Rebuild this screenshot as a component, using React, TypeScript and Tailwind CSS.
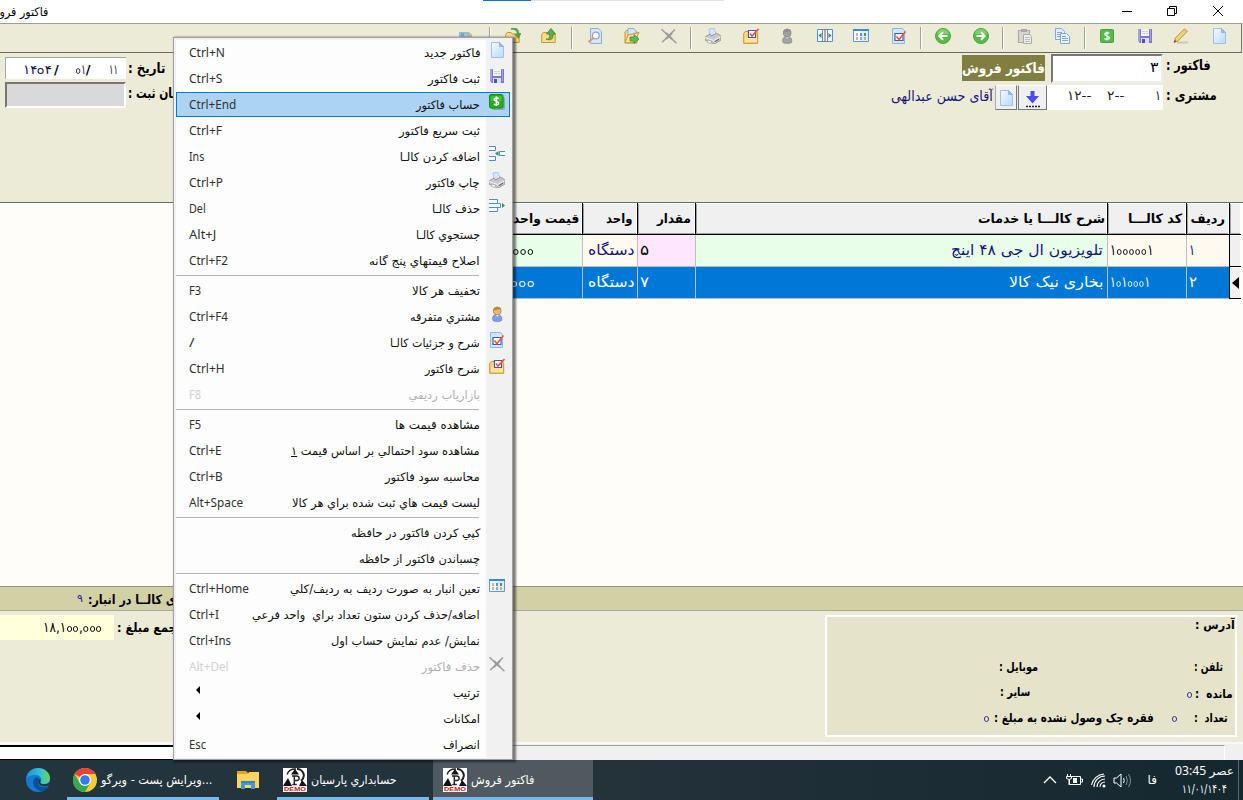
import React, { useLayoutEffect, useRef, useState } from "react";

/* Text squeezed or stretched horizontally to the width given by its class. */
function Fit({ className, children, ltr }: { className: string; children: React.ReactNode; ltr?: boolean }) {
  const outer = useRef<HTMLSpanElement>(null);
  const inner = useRef<HTMLSpanElement>(null);
  const [s, setS] = useState(1);
  useLayoutEffect(() => {
    if (outer.current && inner.current && inner.current.offsetWidth) {
      setS(outer.current.offsetWidth / inner.current.offsetWidth);
    }
  }, []);
  return (
    <span ref={outer} dir={ltr ? "ltr" : "rtl"} className={"block shrink-0 whitespace-pre " + className}>
      <span ref={inner} className={ltr ? "inline-block origin-left" : "inline-block origin-right"} style={{ transform: `scaleX(${s})` }}>
        {children}
      </span>
    </span>
  );
}

/* Number whose zeros are drawn as open rings. */
function Num({ v, className }: { v: string; className: string }) {
  return (
    <Fit ltr className={className}>
      {v.split("").map((c, n) =>
        c === "۰" ? (
          <span key={n} className="relative inline-block">
            <span className="opacity-0">۰</span>
            <span className="absolute top-1/2 left-1/2 h-[6px] w-[6px] -translate-x-1/2 -translate-y-[2px] rounded-full border-[1.5px] border-current" />
          </span>
        ) : (
          <span key={n}>{c}</span>
        )
      )}
    </Fit>
  );
}

const Svg = ({ children }: { children: React.ReactNode }) => (
  <svg width="16" height="16" viewBox="0 0 16 16" className="block shrink-0">{children}</svg>
);

const PageI = () => (
  <Svg>
    <defs><linearGradient id="pg" x1="0" y1="0" x2="1" y2="1"><stop offset="0" stopColor="#f4f9ff" /><stop offset="1" stopColor="#b5dcfa" /></linearGradient></defs>
    <path d="M2.500.5h8l4 4v11h-12z" fill="url(#pg)" stroke="#a9bbe2" />
    <path d="M10.500.5v4h4z" fill="#8fbdec" stroke="#8fa9da" strokeWidth=".8" />
  </Svg>
);
const SaveI = () => (
  <Svg>
    <path d="M1 1h14v14H3l-2-2z" fill="#7d7acb" />
    <path d="M1 1h2v12H1zM13 1h1v12h-1z" fill="#a3a1e2" />
    <path d="M4 1h8v7H4z" fill="#f3f3f3" />
    <path d="M5 3.500h6M5 5.500h6" stroke="#d3d3d3" />
    <path d="M4 10h8v5H4z" fill="#dcdcf4" />
    <path d="M5 11h3v4H5z" fill="#5551a8" />
  </Svg>
);
const DollarI = () => (
  <Svg>
    <rect x="3" y="3" width="13" height="13" rx="1.500" fill="#6f9e8f" opacity=".7" />
    <rect x=".5" y=".5" width="13.500" height="13.500" rx="1.500" fill="#27ab1c" stroke="#158f10" />
    <path d="M2 2h11v5H2z" fill="#62cf4f" opacity=".5" />
    <path d="M9.700 4.700C8.700 3.900 5.200 3.700 5.200 5.700c0 2 4.500 1.300 4.500 3.500 0 2-3.500 1.900-4.800.9M7.400 2.500v9.500" fill="none" stroke="#fff" strokeWidth="1.500" />
  </Svg>
);
const DollarFlatI = () => (
  <Svg>
    <rect x="1.500" y="1.500" width="13" height="13" rx="1" fill="#55ba4b" stroke="#43a43b" />
    <path d="M10.300 5.200C9.300 4.400 5.800 4.200 5.800 6.200c0 2 4.500 1.300 4.500 3.500 0 2-3.500 1.900-4.800.9M8 3.500v9" fill="none" stroke="#fff" strokeWidth="1.300" />
  </Svg>
);
const InsertI = () => (
  <Svg>
    <path d="M0 .500h6.500v4H0M0 10.500h6.500v4H0M16 5.500h-5.500v4H16" fill="#f8fbff" stroke="#4a8fd6" />
    <path d="M9.500 5v5L6 7.500z" fill="#3b8b49" />
  </Svg>
);
const RemoveI = () => (
  <Svg>
    <path d="M0 1.500h8.500v4H0M0 9.500h8.500v4H0M0 5.500h11.500v4H0" fill="#f8fbff" stroke="#4a8fd6" />
    <path d="M13 5v5l3-2.500z" fill="#3b8b49" />
  </Svg>
);
const PrinterI = () => (
  <Svg>
    <path d="M4 1l5-1 2 6-6 2z" fill="#d5e6fc" stroke="#9fbce8" strokeWidth=".8" />
    <path d="M0 9l5-3 1.500 2 4-2 1-1 4.500 3v4l-7 4L0 12z" fill="#c8c8c8" stroke="#8c8c8c" strokeWidth=".8" />
    <path d="M0 9.500l8.500 3 7-4" fill="none" stroke="#f4f4f4" />
    <path d="M3 12l4 1.500-1.500 2L2 14z" fill="#fff" stroke="#888" strokeWidth=".6" />
    <path d="M10 13.500l4-2.300" stroke="#555" />
  </Svg>
);
const PersonI = ({ gray }: { gray?: boolean }) => (
  <Svg>
    <path d="M4 14.500c-1-3 0-6 4-6s5.500 3 4.500 6c-1.500 1.200-7 1.200-8.500 0z" fill={gray ? "#a3a3a3" : "#7f9fee"} stroke={gray ? "#8c8c8c" : "#5f7bd4"} strokeWidth=".8" />
    <circle cx="8.200" cy="5" r="3.900" fill={gray ? "#a0a0a0" : "#f0b76b"} stroke={gray ? "#888" : "#b98337"} strokeWidth=".8" />
    <path d="M4.300 5c-.5-5 7-5.500 8-1.500-3-1-5 .5-6 .500z" fill={gray ? "#8f8f8f" : "#b98a34"} />
    <path d="M7 9l1.300 2L10 9z" fill={gray ? "#ccc" : "#d8e4ff"} />
  </Svg>
);
const CheckPageI = () => (
  <Svg>
    <path d="M1.500.5h10l2 2v13h-12z" fill="#cfe6fb" stroke="#8fb4e6" />
    <path d="M4 5.500h8v7H4z" fill="#fff" stroke="#4b55a5" strokeWidth="1.200" />
    <path d="M5.500 8.500l2.500 3L14.500 3.500" fill="none" stroke="#f0503a" strokeWidth="1.500" />
  </Svg>
);
const FolderPath = () => (
  <path d="M.7 14.500V6.500l1.500-2h4l1 1.500h7v8.500z" fill="#fbdb83" stroke="#c79336" />
);
const CheckFolderI = () => (
  <Svg>
    <path d="M.7 15.300V5.500l1.500-2h11.500l1 2v9.800z" fill="#fbd57b" stroke="#c79336" />
    <path d="M2 9h12v5H2z" fill="#fde9a8" opacity=".7" />
    <path d="M5.500 2.500h7v7h-7z" fill="#fff" stroke="#4b55a5" strokeWidth="1.200" />
    <path d="M7 5.500l2 2.500L15.500 1" fill="none" stroke="#f0503a" strokeWidth="1.600" />
  </Svg>
);
const TableI = () => (
  <Svg>
    <path d="M.5 2.500h15v11H.5z" fill="#f6faff" stroke="#5b9bdb" />
    <path d="M9 3h6v10H6z" fill="#d8ecfc" />
    <path d="M0 1h16v2H0z" fill="#3f87d8" />
    <path d="M3 5h2v3H3z" fill="#b6b2dc" /><path d="M7 5h2v3H7z" fill="#5f8fd8" /><path d="M11 5h2v3h-2z" fill="#4c9b4f" />
    <path d="M3 9h2v3H3z" fill="#f0a07b" /><path d="M7 9h2v3H7z" fill="#7eb3e8" /><path d="M11 9h2v3h-2z" fill="#d8b05c" />
  </Svg>
);
const CrossI = () => (
  <Svg>
    <path d="M.5 1.200L15.500 15.300M14 1.500L1.200 14.200" stroke="#9b9b9b" strokeWidth="1.500" />
    <path d="M5 5l6 6M11 5l-6 6" stroke="#9b9b9b" strokeWidth="2" />
  </Svg>
);
const OpenI = () => (
  <Svg>
    <FolderPath />
    <path d="M6 .8c4-1 7 1 7.300 5" fill="none" stroke="#55a84c" strokeWidth="2.600" />
    <path d="M9 6l7.500-1-3 6z" fill="#4da044" />
  </Svg>
);
const UpI = () => (
  <Svg>
    <FolderPath />
    <path d="M5 11c3 1 4-2 3.500-5H5.500L10 .5 14.500 6H12c.5 5-2 7-7 5z" fill="#5bb04f" stroke="#388539" strokeWidth=".8" />
  </Svg>
);
const PreviewI = () => (
  <Svg>
    <path d="M2.500.5h8l3 3v12h-11z" fill="#d5e6fb" stroke="#94acd9" />
    <circle cx="7.800" cy="7.500" r="3.400" fill="#fff" stroke="#94a2bc" strokeWidth="1.300" />
    <path d="M5.300 10L.5 14" stroke="#cba271" strokeWidth="2" />
  </Svg>
);
const ExportI = () => (
  <Svg>
    <path d="M1 15V4l2-2 2 2h8v11z" fill="#fbdb83" stroke="#c79336" />
    <path d="M4 .5h6l2 3v4H4z" fill="#d5e6fb" stroke="#94acd9" />
    <path d="M1 15l3-8 11-2.500-2 4-3 6z" fill="#fde49b" stroke="#c79336" />
    <path d="M6 9h4V6.500l5 4.500-5 4.500V13H6z" fill="#63b955" stroke="#3a8f3a" strokeWidth=".8" />
  </Svg>
);
const ColumnsI = () => (
  <Svg>
    <path d="M.5 1.500h15v12H.5z" fill="#f4f9ff" stroke="#4d92da" />
    <path d="M5.500 1v13M10.500 1v13" stroke="#4d92da" /><path d="M8 1v13" stroke="#d25656" strokeWidth="1.200" />
    <path d="M4.500 5v5L1.500 7.500zM11.500 5v5l3-2.500z" fill="#3b8b49" />
  </Svg>
);
const ArrowI = ({ right }: { right?: boolean }) => (
  <Svg>
    <circle cx="8" cy="8" r="7.500" fill="#58bb47" stroke="#48a43b" />
    <path d="M2 6a6 5 0 0 1 12 0z" fill="#9bdd87" opacity=".6" />
    <path d={right ? "M3.500 8h8M8 4.300L11.700 8 8 11.700" : "M12.500 8h-8M8 4.300L4.300 8 8 11.700"} fill="none" stroke="#fff" strokeWidth="2" />
  </Svg>
);
const PasteI = () => (
  <Svg>
    <path d="M1.500 2.500h11v12h-11z" fill="#d9d7cd" stroke="#aaa" strokeWidth="1.200" /><path d="M4 1h6v3H4z" fill="#aaa" />
    <path d="M6.500 6.500h6l2 2v7h-8z" fill="#efefef" stroke="#aaa" /><path d="M8 9.500h5M8 11.500h5M8 13.500h5" stroke="#bbb" />
  </Svg>
);
const CopyI = () => (
  <Svg>
    <path d="M.5.500h6l3 3v8h-9z" fill="#e0efff" stroke="#83a5da" /><path d="M2 4.500h5M2 6.500h5M2 8.500h5" stroke="#7fa7e0" />
    <path d="M5.500 5.500h6l3 3v7h-9z" fill="#e8f3ff" stroke="#83a5da" /><path d="M7 8.500h4M7 10.500h6M7 12.500h6" stroke="#7fa7e0" />
  </Svg>
);
const PencilI = () => (
  <Svg>
    <path d="M4 14.500h11" stroke="#c9c6b5" strokeWidth="2" />
    <path d="M1 14.500l1.500-4.500L11.500.8l3 2.400L5 12.800z" fill="#f9d46b" stroke="#b5852e" strokeWidth=".9" />
    <path d="M1 14.500l.8-2.500 1.500 1.300z" fill="#333" /><path d="M10.500 2l3 2.200 1.200-1L11.800.8z" fill="#f1a29a" />
  </Svg>
);
const PictureI = () => (
  <Svg><path d="M1 4h10l3 3v9H1z" fill="#8ebfe2" /><path d="M3 5h3v3H3z" fill="#6ba7d4" /><path d="M10 4l4 3-2 2z" fill="#e6b464" /><path d="M7 6h2v3H7z" fill="#b9d485" /></Svg>
);

const Sep = ({ m }: { m: string }) => <div className={"h-[22px] w-[2px] shrink-0 border-l border-[#a0a098] bg-white " + m} />;

const tools: { m: string; i?: React.ReactNode }[] = [
  { m: "", i: <PictureI /> }, { m: "ml-[15px]" },
  { m: "ml-[14px]", i: <OpenI /> }, { m: "ml-[20px]", i: <UpI /> }, { m: "ml-[14px]" },
  { m: "ml-[15px]", i: <PreviewI /> }, { m: "ml-[20px]", i: <ExportI /> }, { m: "ml-[21px]", i: <CrossI /> }, { m: "ml-[13px]" },
  { m: "ml-[13px]", i: <PrinterI /> }, { m: "ml-[22px]", i: <CheckFolderI /> }, { m: "ml-[20px]", i: <PersonI gray /> },
  { m: "ml-[22px]", i: <ColumnsI /> }, { m: "ml-[20px]", i: <TableI /> }, { m: "ml-[22px]", i: <CheckPageI /> }, { m: "ml-[13px]" },
  { m: "ml-[13px]", i: <ArrowI /> }, { m: "ml-[22px]", i: <ArrowI right /> }, { m: "ml-[13px]" },
  { m: "ml-[13px]", i: <PasteI /> }, { m: "ml-[22px]", i: <CopyI /> }, { m: "ml-[13px]" },
  { m: "ml-[13px]", i: <DollarFlatI /> }, { m: "ml-[22px]", i: <SaveI /> }, { m: "ml-[20px]", i: <PencilI /> }, { m: "ml-[22px]", i: <PageI /> },
];

type Item = { t: string; w: string; k?: string; kw?: string; i?: React.ReactNode; off?: boolean; on?: boolean; sub?: boolean; u?: string };
const groups: Item[][] = [
  [
    { t: "فاکتور جديد", w: "w-[56px]", k: "Ctrl+N", kw: "w-[36px]", i: <PageI /> },
    { t: "ثبت فاکتور", w: "w-[52px]", k: "Ctrl+S", kw: "w-[33px]", i: <SaveI /> },
    { t: "حساب فاکتور", w: "w-[64px]", k: "Ctrl+End", kw: "w-[47px]", i: <DollarI />, on: true },
    { t: "ثبت سريع فاکتور", w: "w-[81px]", k: "Ctrl+F", kw: "w-[33px]" },
    { t: "اضافه کردن کالـا", w: "w-[80px]", k: "Ins", kw: "w-[15px]", i: <InsertI /> },
    { t: "چاپ فاکتور", w: "w-[54px]", k: "Ctrl+P", kw: "w-[34px]", i: <PrinterI /> },
    { t: "حذف کالـا", w: "w-[48px]", k: "Del", kw: "w-[17px]", i: <RemoveI /> },
    { t: "جستجوي کالـا", w: "w-[64px]", k: "Alt+J", kw: "w-[27px]" },
    { t: "اصلاح قيمتهاي پنج گانه", w: "w-[111px]", k: "Ctrl+F2", kw: "w-[39px]" },
  ],
  [
    { t: "تخفيف هر کالا", w: "w-[68px]", k: "F3", kw: "w-[12px]" },
    { t: "مشتري متفرقه", w: "w-[70px]", k: "Ctrl+F4", kw: "w-[39px]", i: <PersonI /> },
    { t: "شرح و جزئيات کالـا", w: "w-[90px]", k: "/", kw: "w-[5px]", i: <CheckPageI /> },
    { t: "شرح فاکتور", w: "w-[55px]", k: "Ctrl+H", kw: "w-[36px]", i: <CheckFolderI /> },
    { t: "بازارياب رديفي", w: "w-[71px]", k: "F8", kw: "w-[12px]", off: true },
  ],
  [
    { t: "مشاهده قيمت ها", w: "w-[85px]", k: "F5", kw: "w-[12px]" },
    { t: "مشاهده سود احتمالي بر اساس قيمت ", u: "۱", w: "w-[189px]", k: "Ctrl+E", kw: "w-[33px]" },
    { t: "محاسبه سود فاکتور", w: "w-[95px]", k: "Ctrl+B", kw: "w-[34px]" },
    { t: "ليست قيمت هاي ثبت شده براي هر کالا", w: "w-[188px]", k: "Alt+Space", kw: "w-[54px]" },
  ],
  [
    { t: "کپي کردن فاکتور در حافظه", w: "w-[129px]" },
    { t: "چسباندن فاکتور از حافظه", w: "w-[121px]" },
  ],
  [
    { t: "تعين انبار به صورت رديف به رديف/کلي", w: "w-[190px]", k: "Ctrl+Home", kw: "w-[60px]", i: <TableI /> },
    { t: "اضافه/حذف کردن ستون تعداد براي  واحد فرعي", w: "w-[228px]", k: "Ctrl+I", kw: "w-[30px]" },
    { t: "نمايش/ عدم نمايش حساب اول", w: "w-[149px]", k: "Ctrl+Ins", kw: "w-[42px]" },
    { t: "حذف فاکتور", w: "w-[58px]", k: "Alt+Del", kw: "w-[40px]", off: true, i: <CrossI /> },
    { t: "ترتيب", w: "w-[27px]", sub: true },
    { t: "امکانات", w: "w-[37px]", sub: true },
    { t: "انصراف", w: "w-[37px]", k: "Esc", kw: "w-[17px]" },
  ],
];

function MenuRow({ it }: { it: Item }) {
  const tone = it.off ? "text-[#b0b0b0]" : "text-[#101010]";
  const keyTone = it.off ? "text-[#d2d2d2]" : "text-[#303030]";
  return (
    <div className="relative flex h-[26px] items-center">
      {it.on && <div className="absolute top-0 left-0 h-[25px] w-[334px] border border-[#0078d7] bg-[#add3f3]" />}
      <div className="relative flex w-[304px] items-center justify-between pl-[13px]">
        {it.k ? (
          <Fit ltr className={"font-['Noto_Sans'] text-[12px] leading-[26px] " + it.kw + " " + keyTone}>{it.k}</Fit>
        ) : it.sub ? (
          <svg width="4" height="8" viewBox="0 0 4 8" className="mb-[6px] ml-[7px]"><path d="M4 0v8L0 4z" fill="#000" /></svg>
        ) : <span />}
        <Fit className={"text-[11.5px] leading-[26px] " + it.w + " " + tone}>{it.t}{it.u && <u>{it.u}</u>}</Fit>
      </div>
      <div className="relative mb-[6px] ml-[9px]">{it.i}</div>
    </div>
  );
}

function Menu() {
  return (
    <div dir="ltr" className="absolute top-[37px] left-[173px] z-10 h-[723px] w-[340px] border border-[#a0a0a0] bg-[#f1f1f1] pt-[2px] pl-[2px] shadow-[2px_1px_2px_1px_rgba(0,0,0,0.5)]">
      <div className="h-[718px] w-[310px] bg-[#fdfdfd]">
        {groups.map((g, n) => (
          <React.Fragment key={n}>
            {n > 0 && <div className="h-[4px] w-[303px] pt-[1px]"><div className="h-px bg-[#b4b4b4]" /></div>}
            <div className="w-[334px]">{g.map((it) => <MenuRow key={it.t} it={it} />)}</div>
          </React.Fragment>
        ))}
      </div>
    </div>
  );
}

function FormArea() {
  return (
    <div className="flex h-[149px] justify-between bg-[#ecebd8]">
      <div className="flex w-[190px] flex-col pt-[4px] pl-[5px]">
        <div className="flex h-[25px]">
          <div className="flex h-[22px] w-[121px] items-center border-t border-l border-[#a9a89d] bg-white pt-[2px] pl-[17px] text-[13px] text-[#14143c]">
            <Num className="w-[29px]" v="۱۴۰۴" /><span className="ml-[2px] font-bold text-black">/</span>
            <Num className="ml-[17px] w-[10px]" v="۰۱" /><span className="font-bold text-black">/</span>
            <Num className="ml-[18px] w-[9px]" v="۱۱" />
          </div>
          <Fit className="ml-[2px] w-[37px] text-[14px] leading-[22px] font-bold">تاریخ :</Fit>
        </div>
        <div className="flex">
          <div className="h-[26px] w-[121px] border-2 border-t-[#77766f] border-r-white border-b-white border-l-[#77766f] bg-[#d9d9d9]" />
          <Fit className="ml-[2px] w-[57px] text-[14px] leading-[22px] font-bold">زمان ثبت :</Fit>
        </div>
      </div>
      <div className="flex flex-col pt-[1px] pr-[26px]">
        <div className="flex justify-end pr-[6px]">
          <div className="mt-[1px] h-[26px] w-[83px] bg-[#807f41]">
            <Fit className="w-[83px] text-[14px] leading-[27px] font-bold text-white">فاکتور فروش</Fit>
          </div>
          <div className="ml-[6px] flex h-[29px] w-[112px] justify-end border-2 border-t-[#77766f] border-r-[#eee] border-b-[#eee] border-l-[#77766f] bg-white pr-[2px]">
            <Fit className="w-[9px] text-[14px] leading-[22px]">۳</Fit>
          </div>
          <Fit className="ml-[3px] w-[45px] text-[14px] leading-[22px] font-bold">فاکتور :</Fit>
        </div>
        <div className="mt-[2px] flex">
          <Fit className="mr-[2px] w-[102px] text-[14px] leading-[22px] text-[#14147a]">آقای حسن عبدالهی</Fit>
          <div className="flex h-[25px] w-[22px] items-center justify-center border border-t-white border-r-[#777] border-b-[#777] border-l-[#aaa] bg-[#f0f0f0]"><PageI /></div>
          <div className="ml-px flex h-[25px] w-[29px] items-center justify-center border border-t-white border-r-[#777] border-b-[#777] border-l-[#777] bg-[#f0f0f0]">
            <svg width="16" height="20" viewBox="0 0 16 20"><path d="M5.500 3h4v5h4.500L7.500 15.500 1 8h4.500z" fill="#4a4afa" /><path d="M1 18.500h14" stroke="#222" strokeWidth="1.500" strokeDasharray="2 1" /></svg>
          </div>
          <div className="flex h-[25px] w-[116px] bg-white text-[13px] leading-[22px] text-[#202020]">
            <Fit ltr className="ml-[20px] w-[24px]">١٢--</Fit>
            <Fit ltr className="ml-[16px] w-[17px]">٢--</Fit>
            <Fit ltr className="ml-[31px] w-[6px]">١</Fit>
          </div>
          <Fit className="ml-[3px] w-[51px] text-[14px] leading-[21px] font-bold">مشتری :</Fit>
        </div>
      </div>
    </div>
  );
}

const head = "flex h-[32px] items-center border-b border-b-black border-l border-l-black bg-[#f0f0f0] text-[13px] font-bold shadow-[inset_-1px_1px_0_#fff,inset_1px_-1px_0_#a0a0a0]";
const cell = "flex h-[32px] items-center border-b border-l border-[#bdbdbd] text-[15px]";

function Grid() {
  return (
    <div className="h-[384px] border-t border-[#696969] bg-[#fefdfa]">
      <div dir="rtl" className="ml-auto grid w-[843px] grid-cols-[12px_43px_79px_412px_58px_55px_1fr] pr-[2px]">
        <div className={head} />
        <div className={head + " pr-[4px]"}><Fit className="w-[35px]">ردیف</Fit></div>
        <div className={head + " pr-[4px]"}><Fit className="w-[54px]">کد کالـــا</Fit></div>
        <div className={head + " pr-[2px]"}><Fit className="w-[127px]">شرح کالـــا یا خدمات</Fit></div>
        <div className={head + " pr-[4px]"}><Fit className="w-[34px]">مقدار</Fit></div>
        <div className={head + " pr-[5px]"}><Fit className="w-[26px]">واحد</Fit></div>
        <div className={head + " pr-[3px]"}><Fit className="w-[66px]">قیمت واحد</Fit></div>

        <div className="h-[32px] border-b border-l border-black bg-[#f0f0f0] shadow-[inset_-1px_1px_0_#fff]" />
        <div className={cell + " justify-end bg-[#fffaf0] pl-[2px] text-[#14147a]"}><Fit ltr className="w-[6px]">۱</Fit></div>
        <div className={cell + " justify-end bg-[#fffaf0] pl-[2px]"}><Num className="w-[43px]" v="۱۰۰۰۰۰۱" /></div>
        <div className={cell + " bg-[#e8fee9] pr-[4px] text-[#14147a]"}><Fit className="w-[152px]">تلویزیون ال جی ۴۸ اینچ</Fit></div>
        <div className={cell + " justify-end bg-[#fde6fe] pl-[2px]"}><Fit ltr className="w-[9px]">۵</Fit></div>
        <div className={cell + " bg-[#fffaf0] pr-[3px] text-[#14147a]"}><Fit className="w-[47px]">دستگاه</Fit></div>
        <div className={cell + " bg-[#e8fee9] pr-[48px]"}><Num className="w-[60px]" v="۲,۵۰۰,۰۰۰" /></div>

        <div className="flex h-[32px] items-center border-b border-l border-black bg-[#f0f0f0] shadow-[inset_-1px_1px_0_#fff]">
          <svg width="7" height="12" viewBox="0 0 7 12" className="mr-[2px]"><path d="M7 0v12L0 6z" fill="#000" /></svg>
        </div>
        <div className={cell + " justify-end bg-[#0078d7] pl-[2px] text-white"}><Fit ltr className="w-[8px]">۲</Fit></div>
        <div className={cell + " justify-end bg-[#0078d7] pl-[2px] text-white"}><Num className="w-[40px]" v="۱۰۱۰۰۰۱" /></div>
        <div className={cell + " bg-[#0078d7] pr-[4px] text-white"}><Fit className="w-[94px]">بخاری نیک کالا</Fit></div>
        <div className={cell + " justify-end bg-[#0078d7] pl-[2px] text-white"}><Fit ltr className="w-[9px]">۷</Fit></div>
        <div className={cell + " bg-[#0078d7] pr-[3px] text-white"}><Fit className="w-[47px]">دستگاه</Fit></div>
        <div className={cell + " bg-[#0078d7] pr-[47px] text-white"}><Num className="w-[56px]" v="۸۰۰,۰۰۰" /></div>
      </div>
    </div>
  );
}

function Details() {
  const row = "flex text-[12px] leading-[16px] text-black";
  return (
    <div dir="rtl" className="h-[122px] w-[412px] border-2 border-white bg-[#e5e4cb]">
      <div className={row}><Fit className="w-[40px] font-bold">آدرس :</Fit></div>
      <div className={row + " mt-[26px] pr-[12px]"}><Fit className="w-[29px] font-bold">تلفن :</Fit><Fit className="mr-[156px] w-[39px] font-bold">موبایل :</Fit></div>
      <div className={row + " mt-[9px] pr-[2px]"}><Fit className="mt-[2px] w-[38px] font-bold">مانده  :</Fit><Num className="mt-[2px] mr-[3px] w-[5px] text-[#2b2390]" v="۰" /><Fit className="mr-[157px] w-[30px] font-bold">سایر :</Fit></div>
      <div className={row + " mt-[8px] pr-[7px]"}><Fit className="w-[34px] font-bold">تعداد  :</Fit><Num className="mr-[17px] w-[5px] text-[#2b2390]" v="۰" /><Fit className="mr-[18px] w-[160px] font-bold">فقره چک وصول نشده به مبلغ :</Fit><Num className="mr-[5px] w-[5px] text-[#2b2390]" v="۰" /></div>
    </div>
  );
}

const DemoLogo = () => (
  <span className="flex h-[24px] w-[24px] shrink-0 flex-col bg-white">
    <svg width="24" height="18" viewBox="0 0 24 18" className="block shrink-0">
      <path d="M0 18l5-8 4 8zM16 18l3-6 5 6z" fill="#111" />
      <path d="M4 6.500a9 8 0 0 1 9-5.500" fill="none" stroke="#222" strokeWidth="1.300" />
      <path d="M8 6.500L12 1l4 5.500z" fill="#111" /><path d="M14 .8c7 1 9 8 4 12" fill="none" stroke="#222" strokeWidth="2" />
      <path d="M9 8h4.500c3.500 0 3.500 4.500 0 4.500H12M11.300 8v8.500M9.300 16.500h4.500" fill="none" stroke="#222" strokeWidth="1.400" />
    </svg>
    <Fit ltr className="ml-px w-[22px] font-['Liberation_Sans'] text-[6px] leading-[6px] font-black text-[#e01010]">DEMO</Fit>
  </span>
);

function Taskbar() {
  return (
    <div dir="ltr" className="flex h-[40px] bg-linear-to-r from-[#22353e] via-[#24323a] to-[#14272f] text-white">
      <div className="flex w-[67px] items-center pl-[26px]">
        <svg width="24" height="24" viewBox="0 0 24 24">
          <defs><linearGradient id="edge" x1="0" x2="1"><stop offset="0" stopColor="#1b8edb" /><stop offset=".6" stopColor="#34c1d4" /><stop offset="1" stopColor="#66d84c" /></linearGradient></defs>
          <circle cx="12" cy="12" r="12" fill="#1479d0" />
          <path d="M0 11C1 4 6 0 12 0c7 0 12 5 12 10 0 4-3 6-6 6-3 0-4-1-3.500-2 2-3 0-7-4.500-7C5 7 1 9 0 11z" fill="url(#edge)" />
          <path d="M9 10c-4 4-1 12 6 13 3 .5 6-2 8-5-6 3-11 0-11-4 0-2 0-2 1-3-1-2-3-2-4-1z" fill="#0c4f9d" />
          <path d="M13 11c-2 3 0 6 4 7 3 .5 5 0 6-1l1-3c-2 2-5 2.500-8 2-2-.4-2-2-1.500-2.500.5-1 0-2-1.500-2.500z" fill="#21333c" />
        </svg>
      </div>
      <div className="flex w-[152px] items-center border-b-[3px] border-[#76b9ed] pt-[2px] pl-[6px]">
        <svg width="24" height="24" viewBox="0 0 24 24">
          <circle cx="12" cy="12" r="12" fill="#fcc934" />
          <path d="M12 12L1.600 6A12 12 0 0 1 22.400 6L12 6z" fill="#ea4335" />
          <path d="M1.600 6A12 12 0 0 0 12 24l5.200-9L12 12 6.800 15z" fill="#34a853" />
          <circle cx="12" cy="12" r="6" fill="#fff" /><circle cx="12" cy="12" r="4.800" fill="#3479ed" />
        </svg>
        <Fit className="ml-[4px] w-[111px] text-[12px]">...ویرایش پست - ویرگو</Fit>
      </div>
      <div className="flex w-[58px] items-center pl-[18px]">
        <svg width="22" height="20" viewBox="0 0 22 20"><path d="M0 1h9l2 2h11v15H0z" fill="#e2a51d" /><path d="M0 4h11l1-2h10v16H0z" fill="#ffd35c" /><path d="M4 11h14v8h-4v-4H8v4H4z" fill="#3e9be0" /><path d="M4 11h14v2H4z" fill="#2b86cf" /></svg>
      </div>
      <div className="flex w-[152px] items-center border-b-[3px] border-[#76b9ed] pt-[2px] pl-[6px]">
        <DemoLogo /><Fit className="ml-[4px] w-[86px] text-[12px]">حسابداري پارسيان</Fit>
      </div>
      <div className="ml-[4px] flex w-[160px] items-center border-b-[3px] border-[#76b9ed] bg-[#50595f] pt-[2px] pl-[10px]">
        <DemoLogo /><Fit className="ml-[4px] w-[63px] text-[12px]">فاکتور فروش</Fit>
      </div>
      <div className="ml-auto flex items-center">
        <svg width="92" height="20" viewBox="0 0 92 20" fill="none" stroke="#fff">
          <path d="M1 13l6-6 6 6" strokeWidth="1.300" />
          <path d="M28 6.500h9.500v8H26.500V10" /><path d="M38 9h1.500v3H38" /><path d="M30 8h4v5h-4z" fill="#fff" stroke="none" />
          <path d="M24.500 4v2M27.500 4v2M23.500 6.500h5v2q-2.500 2-5 0zM26 10v5" />
          <path d="M51 17a11 11 0 0 1 11-11M54 17a8 8 0 0 1 8-8M57 17a5 5 0 0 1 5-5M48.500 15A14 14 0 0 1 61 4" strokeWidth="1.100" />
          <circle cx="61" cy="16" r="1.500" fill="#fff" stroke="none" />
          <path d="M71 8h2.500L78 4v13l-4.500-4H71z" /><path d="M80.500 8q1.500 2.500 0 5" /><path d="M83 6q3 4.500 0 9M85.500 4q4 6.500 0 13" stroke="#829097" />
        </svg>
        <Fit className="ml-[13px] w-[9px] text-[12px]">فا</Fit>
        <div className="ml-[18px] w-[59px] text-[12px] leading-[18px]">
          <Fit className="w-[59px] font-['Noto_Sans','DejaVu_Sans',sans-serif]">عصر 03:45</Fit>
          <Fit ltr className="ml-[7px] w-[45px]">۱۱/۰۱/۱۴۰۴</Fit>
        </div>
        <div className="ml-[4px] h-[40px] w-[5px] border-l border-[#5b6a72]" />
      </div>
    </div>
  );
}

export default function App() {
  return (
    <div className="relative flex h-[800px] w-[1243px] flex-col overflow-hidden bg-[#ecebd8] font-['DejaVu_Sans',sans-serif] text-black">
      <div className="flex h-[23px] bg-white">
        <div dir="rtl" className="flex w-[48px]"><Fit className="w-[62px] text-[12px] leading-[24px]">فاکتور فروش</Fit></div>
        <div className="ml-[435px] flex h-px w-[241px]"><div className="w-[48px] bg-[#0078d7]" /><div className="flex-1 bg-[#e3e3e3]" /></div>
        <div className="ml-auto flex h-[21px] w-[121px] items-center">
          <svg width="104" height="12" viewBox="0 0 104 12" fill="none" stroke="#000">
            <path d="M0 6.500h10M45.500 3.500h7v7h-7zM47.500 3.500v-2h7v7h-2M91 1l10 10M101 1L91 11" />
          </svg>
        </div>
      </div>
      <div className="flex h-[30px] w-[1242px] items-start border-t border-r border-b border-t-[#a09f96] border-r-[#77766f] border-b-[#696969] bg-[#ecebd8] pt-[3px] pl-[458px]">
        {tools.map((t, n) => (t.i ? <div key={n} className={"mt-px " + t.m}>{t.i}</div> : <Sep key={n} m={t.m} />))}
      </div>
      <FormArea />
      <Grid />
      <div className="flex h-[25px] border-t border-b border-t-[#96956b] border-b-[#a9a89d] bg-[#d2d0a5] pl-[77px]">
        <Fit ltr className="w-[6px] text-[11px] leading-[24px] text-[#2b2390]">۹</Fit>
        <Fit className="ml-[5px] w-[122px] text-[13px] leading-[25px] font-bold">موجودی کالــا در انبار:</Fit>
      </div>
      <div className="flex h-[133px] justify-between border-b-2 border-[#f8f8f4] pt-[4px] pr-[6px]">
        <div className="flex">
          <div className="flex h-[25px] w-[114px] bg-[#ffffdc] pl-[43px]"><Num className="w-[59px] text-[14px] leading-[25px]" v="۱۸,۱۰۰,۰۰۰" /></div>
          <Fit className="ml-[3px] w-[60px] text-[13px] leading-[26px] font-bold">جمع مبلغ :</Fit>
        </div>
        <Details />
      </div>
      <div className="flex h-[16px] bg-[#f0f0f0] pt-[1px]">
        <div className="h-[15px] w-[400px] border-t-2 border-b border-black bg-white" />
        <div className="h-[15px] w-[825px] border-t border-r border-t-[#a0a0a0] border-r-white" />
      </div>
      <Taskbar />
      <Menu />
    </div>
  );
}
